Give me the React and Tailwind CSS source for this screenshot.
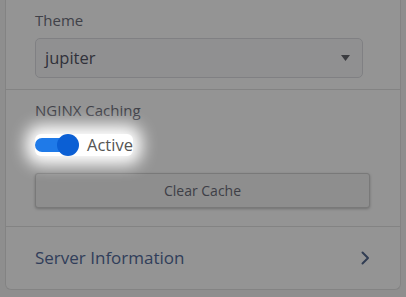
import React from 'react';

const ChevronRight = () => (
  <svg width="10" height="14" viewBox="0 0 10 14" fill="none">
    <path d="M2.5 1.5 L8 7 L2.5 12.5" stroke="#556a90" strokeWidth="2" strokeLinecap="round" strokeLinejoin="round" />
  </svg>
);

const Caret = () => (
  <svg width="9" height="6" viewBox="0 0 9 6">
    <path d="M0 0 H9 L4.5 6 Z" fill="#66686f" />
  </svg>
);

// Toggle switch with the knob sitting over the right end of the track
const Toggle = ({ on }) => (
  <div className="relative w-[44px] h-[22px] flex items-center">
    <div className={`h-[14px] w-[40px] rounded-full ${on ? 'bg-[#1f7ae8]' : 'bg-gray-300'}`} />
    <div className={`absolute top-0 w-[22px] h-[22px] rounded-full ${on ? 'right-0 bg-[#0b5fd4]' : 'left-0 bg-white'}`} />
  </div>
);

export default function App() {
  return (
    <div className="relative min-h-screen h-[297px] bg-[#f4f4f4] font-['Open_Sans',sans-serif] overflow-hidden">
      <div className="mx-[5px] h-[290px] bg-white border-x border-b border-[#e2e2e2] rounded-b-[6px] flex flex-col">
        {/* Theme */}
        <div className="pl-[29px] pt-[10px] pb-[11px] border-b border-[#e2e2e2]">
          <div className="text-[15px] leading-[20px] text-[#6f717d]">Theme</div>
          <div className="mt-[8px] w-[328px] h-[40px] rounded-[5px] border border-[#dcdde2] bg-[#f9f9fa] flex items-center justify-between pl-[9px] pr-[12px]">
            <span className="text-[16.5px] text-[#545566]">jupiter</span>
            <Caret />
          </div>
        </div>

        {/* NGINX Caching */}
        <div className="pl-[29px] pr-[30px] pt-[10px] pb-[18px] border-b border-[#e2e2e2]">
          <div className="text-[15px] leading-[20px] text-[#6f717d]">NGINX Caching</div>
          <div className="mt-[14px] flex">
            <div className="relative z-20 inline-flex items-center gap-[8px] bg-white rounded-md shadow-[0_0_16px_9px_#ffffff]">
              <Toggle on />
              <span className="text-[16.5px] leading-[22px] text-[#555555]">Active</span>
            </div>
          </div>
          <button className="mt-[17px] w-full h-[35px] rounded-[3px] border border-[#d0d0d0] bg-[#f5f5f5] shadow-[0_1px_3px_rgba(0,0,0,0.25)] text-[14px] text-[#6c6d7a]">
            Clear Cache
          </button>
        </div>

        {/* Server Information */}
        <div className="flex-1 flex items-center justify-between pl-[29px] pr-[30px]">
          <span className="text-[17px] text-[#546c9c]">Server Information</span>
          <ChevronRight />
        </div>
      </div>

      {/* tour overlay */}
      <div className="absolute inset-0 z-10 bg-black/[0.42]" />
    </div>
  );
}
